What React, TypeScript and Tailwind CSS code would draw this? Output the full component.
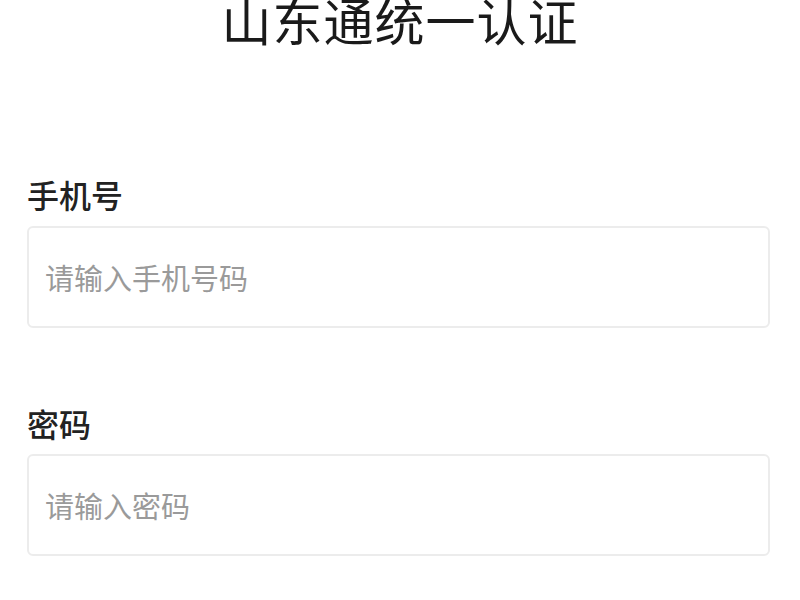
import React from 'react'

const font = { fontFamily: '"Noto Sans CJK SC", "Noto Sans", sans-serif' }

export default function App() {
  return (
    <div className="w-[800px] h-[600px] overflow-hidden bg-white" style={font}>
      <h1 className="text-center text-[50px] leading-none text-[#1a1a1a] font-normal -mt-[6px] tracking-[1px]">
        山东通统一认证
      </h1>

      <div className="pl-[27px] pr-[30px] mt-[134px]">
        <label className="block text-[32px] leading-none text-[#222] font-medium">手机号</label>
        <input
          type="tel"
          placeholder="请输入手机号码"
          className="mt-[16px] w-full h-[102px] rounded-[6px] border-2 border-[#ececec] px-[16px] text-[29px] text-[#333] placeholder:text-[#9a9a9a] outline-none"
        />

        <label className="block mt-[79px] text-[32px] leading-none text-[#222] font-medium">密码</label>
        <input
          type="password"
          placeholder="请输入密码"
          className="mt-[15px] w-full h-[102px] rounded-[6px] border-2 border-[#ececec] px-[16px] text-[29px] text-[#333] placeholder:text-[#9a9a9a] outline-none"
        />
      </div>
    </div>
  )
}
